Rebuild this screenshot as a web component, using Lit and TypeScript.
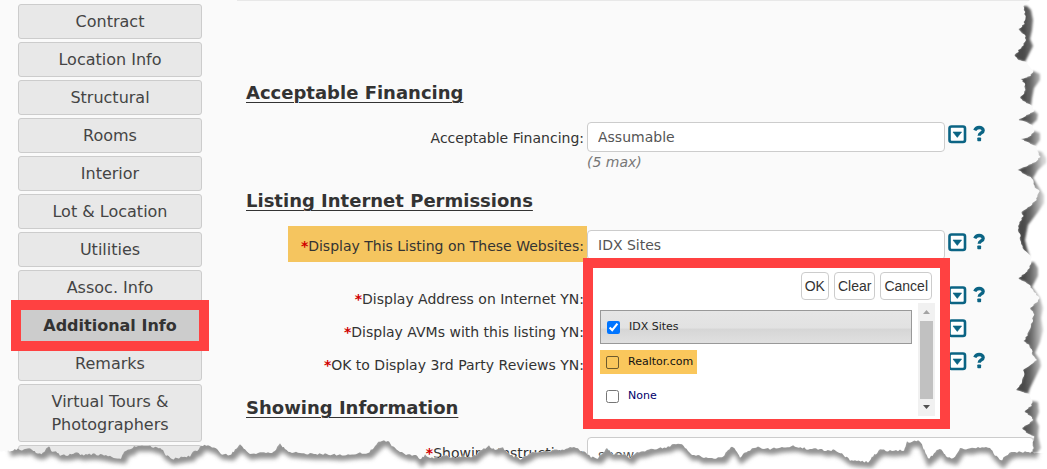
import { LitElement, html, svg, css, nothing } from "lit";
import { customElement, property, state } from "lit/decorators.js";

type Point = [number, number];

/* Lower torn edge, left to right, on a 1047 x 469 sheet. */
const BOTTOM_EDGE: Point[] = [
  [0, 452], [8, 451], [13, 450], [18, 449], [24, 450], [28, 449], [32, 449], [36, 453], [40, 454], [43, 453], [47, 447],
  [49, 447], [52, 451], [56, 452], [60, 455], [68, 455], [77, 453], [82, 455], [93, 454], [102, 455], [112, 457],
  [121, 458], [124, 451], [130, 450], [134, 446], [142, 446], [150, 446], [157, 448], [162, 449], [166, 455],
  [172, 459], [177, 458], [183, 457], [190, 456], [192, 452], [197, 451], [201, 445], [208, 446], [216, 449],
  [222, 454], [230, 455], [235, 450], [240, 445], [245, 450], [250, 454], [258, 453], [264, 453], [272, 453],
  [276, 449], [280, 444], [285, 449], [290, 452], [300, 453], [312, 454], [325, 454], [340, 455], [350, 454],
  [360, 453], [368, 453], [375, 446], [380, 441], [388, 441], [393, 447], [400, 452], [408, 455], [416, 455],
  [420, 460], [425, 455], [432, 458], [440, 457], [447, 456], [455, 458], [463, 456], [473, 457], [480, 451],
  [489, 446], [495, 450], [503, 448], [510, 455], [520, 459], [527, 456], [533, 452], [545, 451], [560, 450],
  [574, 447], [578, 449], [584, 452], [591, 457], [598, 458], [603, 453], [607, 448], [612, 454], [622, 454],
  [630, 458], [635, 453], [643, 452], [653, 449], [668, 447], [674, 444], [682, 445], [688, 451], [692, 455],
  [698, 455], [702, 458], [722, 458], [728, 450], [732, 446], [737, 452], [740, 457], [748, 451], [756, 447],
  [770, 449], [780, 447], [795, 446], [808, 449], [820, 449], [826, 451], [833, 450], [842, 454], [850, 460],
  [855, 461], [868, 462], [873, 456], [880, 450], [892, 451], [904, 450], [907, 442], [920, 441], [923, 447],
  [928, 459], [934, 454], [938, 449], [943, 451], [946, 457], [953, 459], [960, 448], [970, 449], [978, 447],
  [990, 448], [995, 455], [1001, 461], [1006, 455], [1013, 452], [1025, 452], [1032, 452], [1036, 453],
];

/* Shadowed flaps of the right torn edge: ragged inner side, then smooth outer side. */
const RIGHT_FLAPS: { inner: Point[]; outer: Point[] }[] = [
  {
    inner: [[1024, 6], [1025, 16], [1024, 24], [1019, 29], [1025, 36], [1026, 40], [1022, 47], [1018, 50], [1018, 52], [1014, 56], [1019, 60], [1026, 62]],
    outer: [[1027, 58], [1030, 52], [1033, 46], [1030, 39], [1032, 30], [1033, 20], [1031, 10], [1027, 6]],
  },
  {
    inner: [[1034, 71], [1030, 76], [1021, 79], [1024, 83], [1026, 90], [1020, 98], [1025, 102], [1032, 106]],
    outer: [[1032, 98], [1034, 88], [1040, 80], [1040, 74]],
  },
  { inner: [[1035, 111], [1027, 115], [1018, 120], [1027, 122], [1032, 125]], outer: [[1037, 120], [1038, 114]] },
  { inner: [[1035, 131], [1029, 137], [1021, 139], [1029, 143], [1036, 146]], outer: [[1040, 140], [1040, 133]] },
  {
    inner: [[1038, 151], [1040, 157], [1035, 162], [1018, 170], [1024, 174], [1032, 178], [1034, 186], [1039, 191], [1038, 195], [1036, 200], [1030, 206], [1022, 212], [1023, 216], [1020, 222], [1018, 228], [1020, 236], [1021, 242], [1024, 250], [1031, 257]],
    outer: [[1027, 248], [1025, 240], [1028, 225], [1038, 212], [1044, 203], [1044, 195], [1038, 186], [1033, 178], [1038, 170], [1046, 163], [1046, 158], [1042, 152]],
  },
  {
    inner: [[1032, 262], [1028, 270], [1018, 279], [1026, 282], [1030, 286], [1039, 298], [1037, 302], [1030, 308], [1034, 313], [1032, 322], [1030, 330], [1024, 341], [1030, 346], [1033, 355], [1037, 360], [1031, 364], [1023, 370], [1024, 376], [1022, 382], [1016, 390], [1029, 394]],
    outer: [[1030, 388], [1036, 376], [1041, 366], [1040, 360], [1035, 353], [1040, 342], [1043, 330], [1041, 318], [1043, 308], [1040, 298], [1032, 287], [1038, 276], [1038, 268], [1034, 262]],
  },
  {
    inner: [[1033, 401], [1031, 406], [1024, 411], [1030, 416], [1034, 420], [1022, 428], [1028, 434], [1035, 437], [1032, 442], [1034, 448], [1031, 453]],
    outer: [[1037, 453], [1041, 448], [1038, 436], [1039, 426], [1036, 420], [1039, 412], [1038, 402]],
  },
];

/* Breaks straight runs into small uneven steps so that they read as torn paper. */
function roughen(points: Point[], vertical: boolean): Point[] {
  const out: Point[] = [];
  let seed = 7;
  for (let i = 0; i < points.length - 1; i++) {
    const [x0, y0] = points[i];
    const [x1, y1] = points[i + 1];
    const steps = Math.max(1, Math.round(Math.hypot(x1 - x0, y1 - y0) / 2));
    for (let s = 0; s < steps; s++) {
      seed = (seed * 73 + 41) % 997;
      const jitter = (seed % 3) - 1;
      const x = x0 + ((x1 - x0) * s) / steps;
      const y = y0 + ((y1 - y0) * s) / steps;
      out.push(vertical ? [x + jitter * 0.7, y] : [x, y + jitter * 0.8]);
    }
  }
  out.push(points[points.length - 1]);
  return out;
}

const line = (points: Point[]) => "M" + points.map((p) => `${p[0].toFixed(1)} ${p[1].toFixed(1)}`).join("L");

@customElement("torn-edge")
class TornEdge extends LitElement {
  static styles = css`
    :host {
      display: block;
      pointer-events: none;
    }
    .sheet {
      display: block;
      width: 100%;
      height: 100%;
    }
  `;

  render() {
    const bottom = line(roughen(BOTTOM_EDGE, false));
    const below = `${bottom}L1047 453L1047 469L0 469Z`;
    const side: Point[] = RIGHT_FLAPS.flatMap((f) => roughen(f.inner, true));
    const beyond = `M1030 0L${line(side).slice(1)}L1031 469L1047 469L1047 0Z`;
    return html`<svg class="sheet" viewBox="0 0 1047 469" preserveAspectRatio="none" aria-hidden="true">
      <defs>
        <clipPath id="below"><path d=${below} /></clipPath>
        <clipPath id="beyond"><path d=${beyond} /></clipPath>
        <filter id="soft" x="-10%" y="-100%" width="120%" height="300%"><feGaussianBlur stdDeviation="2" /></filter>
        <filter id="fine" x="-30%" y="-10%" width="160%" height="120%"><feGaussianBlur stdDeviation="1" /></filter>
        <linearGradient id="fade" gradientUnits="userSpaceOnUse" x1="1024" y1="0" x2="1043" y2="0">
          <stop offset="0" stop-color="#4a4a4a" />
          <stop offset="0.4" stop-color="#6e6e6e" />
          <stop offset="1" stop-color="#d4d4d4" />
        </linearGradient>
      </defs>
      <path d=${beyond} fill="#fff" />
      <path d=${below} fill="#fff" />
      <g clip-path="url(#below)">
        <path d=${line(BOTTOM_EDGE.slice(1))} transform="translate(2 1)" fill="none" stroke="#929292" stroke-width="9" filter="url(#soft)" />
      </g>
      <g clip-path="url(#beyond)">
        ${RIGHT_FLAPS.map(
          (f) => svg`<path d=${line([...f.inner.map(([x, y]) => [x - 1, y] as Point), ...f.outer]) + "Z"} fill="url(#fade)" filter="url(#fine)" />`,
        )}
      </g>
    </svg>`;
  }
}

@customElement("field-tools")
class FieldTools extends LitElement {
  @property({ type: Boolean }) help = false;

  static styles = css`
    :host {
      display: flex;
      gap: 6px;
      padding-top: 3px;
    }
    .tool {
      display: block;
      border: 0;
      padding: 0;
      background: none;
      cursor: pointer;
    }
    .glyph {
      display: block;
    }
  `;

  render() {
    return html`<button class="tool" type="button" aria-label="Open list">
        <svg class="glyph" width="19" height="19" viewBox="0 0 19 19">
          <rect x="1.5" y="1.5" width="15.5" height="15.5" rx="2" fill="#fff" stroke="#0b6484" stroke-width="2.6" />
          <path d="M5 7h8.6L9.300 12.400z" fill="#0b6484" stroke="#0b6484" stroke-width="0.6" stroke-linejoin="round" />
        </svg>
      </button>
      ${this.help
        ? html`<button class="tool" type="button" aria-label="Help">
            <svg class="glyph" width="13" height="19" viewBox="0 0 13 19">
              <path
                d="M1.800 5.300C2.700 3.200 4.200 2.500 6.100 2.500c2.500 0 4.100 1.100 4.100 2.900 0 2.700-4 2.500-4 5.400"
                fill="none" stroke="#0b6484" stroke-width="3.300" />
              <rect x="4.300" y="12.400" width="3.800" height="3.800" rx="0.800" fill="#0b6484" />
            </svg>
          </button>`
        : nothing}`;
  }
}

@customElement("site-picker")
class SitePicker extends LitElement {
  static styles = css`
    :host {
      display: block;
      box-sizing: border-box;
      border: 10px solid #ff4141;
      background: #fff;
      padding: 4px 5px 3px 7px;
    }
    .actions {
      display: flex;
      justify-content: flex-end;
      gap: 5px;
      padding-right: 3px;
    }
    .action {
      box-sizing: border-box;
      height: 28px;
      padding: 0 3px;
      border: 1px solid #ccc;
      border-radius: 4px;
      background: #fff;
      color: #333;
      font: 14px/20px "Liberation Sans", Arial, sans-serif;
    }
    .body {
      display: flex;
      gap: 6px;
      padding-top: 3px;
    }
    .options {
      flex: 1;
      display: flex;
      flex-direction: column;
      align-items: flex-start;
      padding-top: 7px;
      font: 11px/16px "DejaVu Sans", Verdana, sans-serif;
      color: #00006b;
    }
    .option {
      box-sizing: border-box;
      display: flex;
      align-items: center;
      gap: 9px;
      height: 24px;
      padding: 0 4px 0 6px;
      margin-bottom: 10px;
    }
    .option:last-child {
      margin-bottom: 0;
    }
    .option.chosen {
      align-self: stretch;
      height: 34px;
      margin-bottom: 6px;
      border: 1px solid #999;
      background: linear-gradient(#e6e6e6, #e2e2e2 52%, #d6d6d6 58%, #e0e0e0);
      color: #222;
    }
    .option.marked {
      background: #fac75c;
      color: #111;
    }
    .tick {
      width: 13px;
      height: 13px;
      margin: 0;
    }
    .marked .tick {
      appearance: none;
      border: 1px solid #6d5a2d;
      border-radius: 2px;
    }
    .bar {
      width: 17px;
      display: flex;
      flex-direction: column;
      align-items: center;
      justify-content: space-between;
      background: #f1f1f1;
      height: 113px;
    }
    .arrow {
      display: block;
    }
    .thumb {
      width: 13px;
      height: 78px;
      background: #c1c1c1;
    }
  `;

  render() {
    return html`<div class="actions">
        <button class="action" type="button">OK</button>
        <button class="action" type="button">Clear</button>
        <button class="action" type="button">Cancel</button>
      </div>
      <div class="body">
        <div class="options">
          <label class="option chosen"><input class="tick" type="checkbox" checked />IDX Sites</label>
          <label class="option marked"><input class="tick" type="checkbox" />Realtor.com</label>
          <label class="option"><input class="tick" type="checkbox" />None</label>
        </div>
        <div class="bar">
          <svg class="arrow" width="17" height="17" viewBox="0 0 17 17"><path d="M5 11h7L8.500 7z" fill="#a3a3a3" /></svg>
          <div class="thumb"></div>
          <svg class="arrow" width="17" height="17" viewBox="0 0 17 17"><path d="M5 6h7L8.500 10z" fill="#505050" /></svg>
        </div>
      </div>`;
  }
}

@customElement("app-root")
class AppRoot extends LitElement {
  @state() private current = "Additional Info";

  private sections = [
    "Contract", "Location Info", "Structural", "Rooms", "Interior", "Lot & Location",
    "Utilities", "Assoc. Info", "Additional Info", "Remarks", "Virtual Tours & Photographers", "",
  ];

  static styles = css`
    :host {
      position: relative;
      display: flex;
      height: 100vh;
      overflow: hidden;
      background: #fafafa;
      color: #333;
      font-family: "DejaVu Sans", Verdana, sans-serif;
    }
    .nav {
      flex: none;
      width: 184px;
      display: flex;
      flex-direction: column;
      gap: 3px;
      padding: 4px 35px 0 18px;
    }
    .section {
      position: relative;
      flex: none;
      padding: 5px 20px;
      border: 1px solid #ccc;
      border-radius: 3px;
      background: #e8e8e8;
      color: #444;
      font: 16px/23px "DejaVu Sans", Verdana, sans-serif;
      min-height: 35px;
    }
    .section.current {
      z-index: 1;
      background: #ccc;
      color: #333;
      font-weight: bold;
      padding: 5px 0;
    }
    .section.current::after {
      content: "";
      position: absolute;
      inset: -9px -8px;
      border: 10px solid #ff4141;
    }
    .form {
      flex: 1;
      min-width: 0;
      border-top: 1px solid #e8e8e8;
      padding: 79px 13px 0 9px;
    }
    .title {
      margin: 0;
      font-size: 18px;
      line-height: 26px;
      text-decoration: underline;
      text-decoration-thickness: 1px;
      text-underline-offset: 3px;
    }
    .rows {
      display: flex;
      flex-direction: column;
      gap: 3px;
      padding: 16px 0;
    }
    .row {
      display: grid;
      grid-template-columns: 341px 1fr 89px;
      align-items: start;
    }
    .caption {
      justify-self: end;
      padding: 4px 3px 0 16px;
      font-size: 14px;
      line-height: 24px;
      white-space: nowrap;
    }
    .caption.marked {
      background: #f5c55f;
      margin-top: -4px;
      padding: 8px 3px 4px 13px;
    }
    .star {
      color: #d00000;
      font-weight: bold;
    }
    .control {
      position: relative;
    }
    .wide {
      grid-column: 2 / 4;
    }
    .box {
      display: block;
      box-sizing: border-box;
      width: 100%;
      height: 30px;
      padding: 0 10px;
      border: 1px solid #ccc;
      border-radius: 4px;
      background: #fff;
      color: #555;
      font: 14px/20px "DejaVu Sans", Verdana, sans-serif;
    }
    .area {
      height: 80px;
      padding: 7px 10px;
      resize: none;
      overflow: hidden;
    }
    .hint {
      min-height: 20px;
      font-size: 14px;
      line-height: 20px;
      font-style: italic;
      color: #777;
    }
    .tools {
      margin-left: 3px;
    }
    .popup {
      position: absolute;
      top: 28px;
      left: -4px;
      right: -5px;
      z-index: 2;
    }
    .tear {
      position: absolute;
      inset: 0;
      z-index: 3;
    }
  `;

  private field(id: string, label: string, o: { value?: string; required?: boolean; hint?: string; marked?: boolean; help?: boolean; picker?: boolean }) {
    return html`<div class="row">
      <label class="caption ${o.marked ? "marked" : ""}" for=${id}
        >${o.required ? html`<span class="star">*</span>` : nothing}${label}:</label
      >
      <div class="control">
        <input class="box" id=${id} type="text" .value=${o.value ?? ""} />
        ${o.hint !== undefined ? html`<div class="hint">${o.hint}</div>` : nothing}
        ${o.picker ? html`<site-picker class="popup"></site-picker>` : nothing}
      </div>
      <field-tools class="tools" ?help=${o.help ?? false}></field-tools>
    </div>`;
  }

  render() {
    return html`<nav class="nav">
        ${this.sections.map(
          (s) => html`<button type="button" class="section ${s === this.current ? "current" : ""}" @click=${() => (this.current = s)}>${s}</button>`,
        )}
      </nav>
      <main class="form">
        <h2 class="title">Acceptable Financing</h2>
        <div class="rows">
          ${this.field("financing", "Acceptable Financing", { value: "Assumable", hint: "(5 max)", help: true })}
        </div>
        <h2 class="title">Listing Internet Permissions</h2>
        <div class="rows">
          ${this.field("sites", "Display This Listing on These Websites", { value: "IDX Sites", required: true, marked: true, hint: "", help: true, picker: true })}
          ${this.field("address", "Display Address on Internet YN", { required: true, help: true })}
          ${this.field("avms", "Display AVMs with this listing YN", { required: true })}
          ${this.field("reviews", "OK to Display 3rd Party Reviews YN", { required: true, help: true })}
        </div>
        <h2 class="title">Showing Information</h2>
        <div class="rows">
          <div class="row">
            <label class="caption" for="showing"><span class="star">*</span>Showing Instructions:</label>
            <div class="control wide"><textarea class="box area" id="showing" .value=${"show"}></textarea></div>
          </div>
        </div>
      </main>
      <torn-edge class="tear"></torn-edge>`;
  }
}
